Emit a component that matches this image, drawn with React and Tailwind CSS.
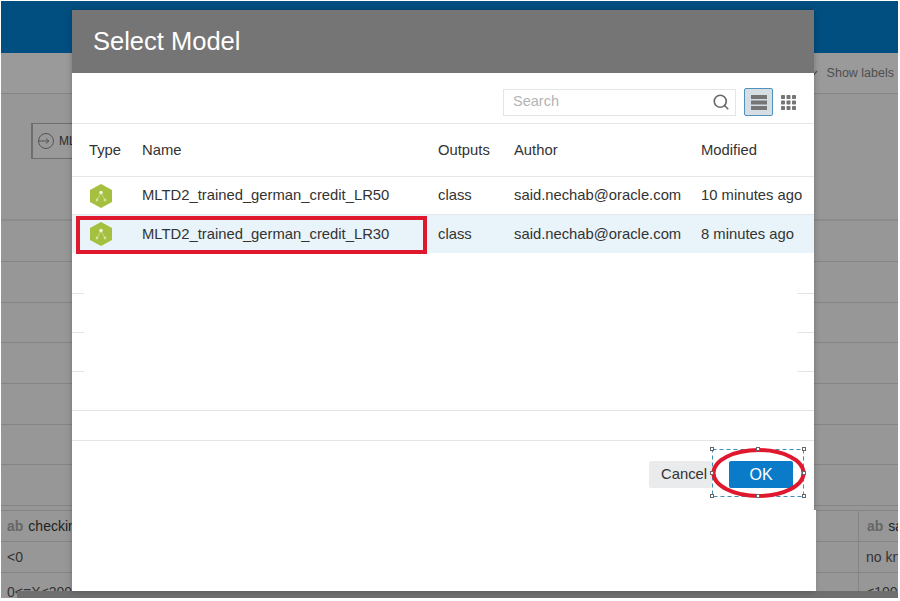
import { Search } from "lucide-react";

const FONT = "font-['Liberation_Sans',Arial,sans-serif]";

const MODELS = [
  { name: "MLTD2_trained_german_credit_LR50", outputs: "class", author: "said.nechab@oracle.com", modified: "10 minutes ago" },
  { name: "MLTD2_trained_german_credit_LR30", outputs: "class", author: "said.nechab@oracle.com", modified: "8 minutes ago", selected: true },
];

const COLS = "grid grid-cols-[70px_296px_76px_187px_113px] items-center";

// Green hexagon model icon
function ModelIcon() {
  return (
    <svg width="24" height="24" viewBox="0 0 24 24" className="ml-[17px]">
      <polygon points="12,0 23,6 23,18 12,24 1,18 1,6" fill="#a5bf3e" />
      <path d="M12 9 L8 16 M12 9 L16 16" stroke="#c9da8a" strokeWidth="1" fill="none" />
      <circle cx="12" cy="8.5" r="1.8" fill="#eef3d6" />
      <circle cx="8" cy="16" r="1.4" fill="#d3e0a0" />
      <circle cx="16" cy="16" r="1.4" fill="#d3e0a0" />
    </svg>
  );
}

function ListIcon() {
  return (
    <svg width="16" height="15" viewBox="0 0 16 15" fill="#757575">
      <rect x="0" y="0" width="16" height="4" />
      <rect x="0" y="5.5" width="16" height="4" />
      <rect x="0" y="11" width="16" height="4" />
    </svg>
  );
}

function GridIcon() {
  const spots = [0, 5.5, 11];
  return (
    <svg width="15" height="15" viewBox="0 0 15 15" fill="#757575">
      {spots.map((y) =>
        spots.map((x) => <rect key={`${x}-${y}`} x={x} y={y} width="4" height="4" rx="0.8" />)
      )}
    </svg>
  );
}

function EmptyRow({ height }) {
  return (
    <div className={`flex items-end justify-between ${height}`}>
      <div className="h-px w-[12px] bg-[#e4e4e4]" />
      <div className="h-px w-[17px] bg-[#e4e4e4]" />
    </div>
  );
}

// The dimmed application behind the dialog
function Backdrop() {
  const rows = ["h-[41px]", "h-[41px]", "h-[40px]", "h-[41px]", "h-[41px]", "h-[40px]", "h-[41px]"];
  return (
    <div className="flex h-[597px] flex-col overflow-hidden bg-[#979797]">
      <div className="h-[52px] shrink-0 bg-[#004f80]" />
      <div className="flex h-[41px] shrink-0 items-center justify-end gap-[9px] border-b border-[#858585] bg-[#9a9a9a] pr-[4px]">
        <svg width="8" height="6" viewBox="0 0 8 6" fill="none" stroke="#555" strokeWidth="1.4">
          <path d="M1 1 L4 4.5 L7 1" />
        </svg>
        <span className="text-[12.5px] text-[#4f4f4f]">Show labels</span>
      </div>
      <div className="h-[127px] shrink-0 border-b-2 border-[#8c8c8c] pl-[30px] pt-[29px]">
        <div className="flex h-[36px] w-[80px] items-center gap-[4px] border border-l-2 border-[#6e6e6e] bg-[#999] pl-[4px]">
          <svg width="18" height="18" viewBox="0 0 18 18" fill="none" stroke="#555" strokeWidth="1">
            <circle cx="9" cy="9" r="7.5" />
            <path d="M1 9 H11 M9 6.5 L12 9 L9 11.5" />
          </svg>
          <span className="text-[12px] font-medium text-[#2a2a2a]">ML</span>
        </div>
      </div>
      {rows.map((h, i) => (
        <div key={i} className={`${h} shrink-0 border-b border-[#848484]`} />
      ))}
      <div className="h-[5px] shrink-0 border-b border-[#848484]" />
      <div className="grid h-[31px] shrink-0 grid-cols-[857px_1fr] border-b border-[#848484] text-[14px] text-[#222]">
        <div className="flex items-center gap-[5px] pl-[6px]">
          <span className="font-bold text-[#666]">ab</span>
          <span>checking_status</span>
        </div>
        <div className="flex items-center gap-[5px] border-l border-[#858585] pl-[8px]">
          <span className="font-bold text-[#666]">ab</span>
          <span>sa</span>
        </div>
      </div>
      <div className="grid h-[31px] shrink-0 grid-cols-[857px_1fr] border-b border-[#848484] text-[14px] text-[#333]">
        <div className="flex items-center pl-[6px]">&lt;0</div>
        <div className="flex items-center whitespace-nowrap border-l border-[#858585] pl-[7px]">no kn</div>
      </div>
      <div className="grid h-[31px] shrink-0 grid-cols-[857px_1fr] text-[14px] text-[#333]">
        <div className="pl-[6px] pt-[9px]">0&lt;=X&lt;200</div>
        <div className="whitespace-nowrap border-l border-[#858585] pl-[7px] pt-[9px]">&lt;100</div>
      </div>
    </div>
  );
}

function SelectModelDialog() {
  return (
    <div className="absolute left-[72px] top-[10px] flex h-[581px] w-[742px] flex-col bg-white shadow-[0_0_6px_rgba(0,0,0,0.25)]">
      <div className="flex h-[63px] shrink-0 items-center bg-[#757575] pl-[21px] text-[25.5px] text-white">
        Select Model
      </div>

      <div className="flex h-[51px] shrink-0 items-center justify-end gap-[8px] border-b border-[#e6e6e6] pr-[18px] pt-[8px]">
        <div className="flex h-[27px] w-[233px] items-center justify-between border border-[#e1e6ea] pl-[9px] pr-[5px] text-[14.5px] text-[#b4b4b4]">
          <span>Search</span>
          <Search size={18} strokeWidth={2.2} className="text-[#6a6a6a]" />
        </div>
        <div className="flex h-[28px] w-[29px] items-center justify-center rounded-[2px] border border-[#4f93bd] bg-[#d6dde3]">
          <ListIcon />
        </div>
        <GridIcon />
      </div>

      <div className={`${COLS} h-[53px] shrink-0 border-b border-[#e6e6e6] text-[14.8px] text-[#333]`}>
        <span className="pl-[17px]">Type</span>
        <span>Name</span>
        <span>Outputs</span>
        <span>Author</span>
        <span>Modified</span>
      </div>

      {MODELS.map((m) => (
        <div
          key={m.name}
          className={`${COLS} h-[38px] shrink-0 text-[14.8px] text-[#333] ${m.selected ? "bg-[#e8f3fa]" : "border-b border-[#e6e6e6]"}`}
        >
          <ModelIcon />
          <span>{m.name}</span>
          <span>{m.outputs}</span>
          <span>{m.author}</span>
          <span className="whitespace-nowrap">{m.modified}</span>
        </div>
      ))}

      <EmptyRow height="h-[41px]" />
      <EmptyRow height="h-[39px]" />
      <EmptyRow height="h-[39px]" />
      <div className="h-[39px] shrink-0 border-b border-[#e4e4e4]" />
      <div className="h-[30px] shrink-0 border-b border-[#e4e4e4]" />

      <div className="flex justify-end gap-[17px] pr-[21px] pt-[20px]">
        <button className="flex h-[27px] w-[63px] items-center justify-start rounded-[2px] bg-[#e9ebed] pl-[12px] text-[14.8px] text-[#333]">
          Cancel
        </button>
        <button className="flex h-[27px] w-[64px] items-center justify-center rounded-[2px] bg-[#0a7bc8] text-[16px] text-white">
          OK
        </button>
      </div>
    </div>
  );
}

// Hand-drawn callouts the screenshot's author put on top
function Annotations() {
  const handles = [
    [712, 449], [758, 449], [804, 449],
    [712, 473], [804, 473],
    [712, 496], [758, 496], [804, 496],
  ];
  return (
    <>
      <div className="absolute left-[76px] top-[216px] h-[38px] w-[351px] border-[4px] border-[#e0182d]" />
      <svg className="absolute left-0 top-0" width="900" height="601" fill="none">
        <rect x="712.5" y="449.5" width="91" height="47" stroke="#3f8fb8" strokeDasharray="4 3" />
        <ellipse cx="758.5" cy="473" rx="45" ry="23" stroke="#e0182d" strokeWidth="4" />
        {handles.map(([x, y]) => (
          <rect key={`${x}-${y}`} x={x - 1.5} y={y - 1.5} width="3" height="3" fill="#fff" stroke="#666" />
        ))}
      </svg>
    </>
  );
}

export default function App() {
  return (
    <div className={`relative h-[601px] w-[900px] overflow-hidden bg-white pl-[1px] pr-[2px] pt-[1px] ${FONT}`}>
      <Backdrop />
      <div className="absolute bottom-[3px] left-[17px] right-[2px] h-[7px] bg-[#6f6f6f]" />
      <SelectModelDialog />
      <div className="absolute left-[814px] top-[510px] h-[81px] w-[2px] bg-white" />
      <Annotations />
    </div>
  );
}
